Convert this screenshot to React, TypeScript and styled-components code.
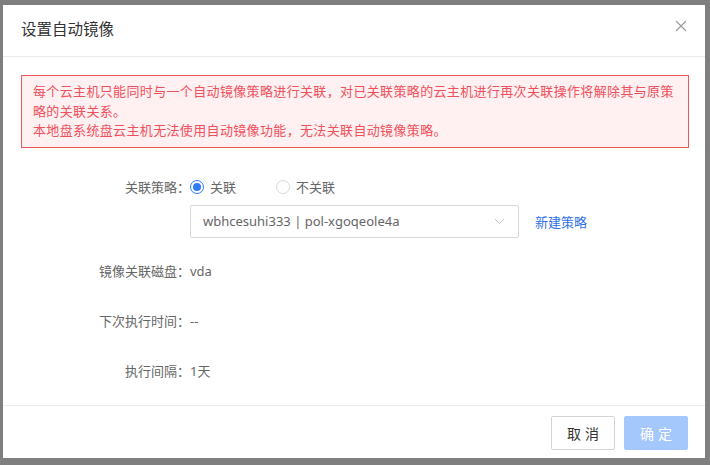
import React, { ReactElement } from "react";
import styled, { createGlobalStyle } from "styled-components";

const GlobalStyle = createGlobalStyle`
  html, body {
    margin: 0;
    padding: 0;
    background: #7f7f7f;
  }
  body {
    font-family: "Noto Sans", "Noto Sans CJK SC", sans-serif;
    font-size: 13px;
    color: #666;
  }
`;

const Overlay = styled.div`
  width: 710px;
  height: 465px;
  padding: 5px 5px 0 3px;
  box-sizing: border-box;
  overflow: hidden;
`;

const Modal = styled.div`
  width: 702px;
  height: 453px;
  background: #fff;
  display: flex;
  flex-direction: column;
`;

const Header = styled.div`
  height: 52px;
  box-sizing: border-box;
  border-bottom: 1px solid #ebebeb;
  display: flex;
  align-items: center;
  justify-content: space-between;
  padding: 0 18px 4px 18px;
`;

const Title = styled.div`
  font-size: 15.5px;
  color: #333;
`;

const Close = styled.button`
  border: none;
  background: none;
  padding: 0;
  width: 12px;
  height: 12px;
  display: flex;
  cursor: pointer;
  margin-top: -6px;
`;

const Body = styled.div`
  flex: 1;
  padding: 18px 16px 0 18px;
  display: flex;
  flex-direction: column;
`;

const Alert = styled.div`
  border: 1px solid #f0585f;
  background: #fff0f2;
  color: #f0505c;
  padding: 6px 10px 6px 11px;
  line-height: 19.5px;
  font-size: 13px;
  letter-spacing: 0.35px;
`;

const Row = styled.div<{ $top: number }>`
  display: flex;
  align-items: center;
  margin-top: ${(p) => p.$top}px;
  min-height: 20px;
`;

const Label = styled.div`
  width: 169px;
  text-align: right;
  color: #666;
  flex-shrink: 0;
`;

const Value = styled.div`
  color: #666;
`;

const RadioItem = styled.label`
  display: flex;
  align-items: center;
  gap: 6px;
  margin-right: 40px;
  color: #666;
  cursor: pointer;
`;

const RadioCircle = styled.span<{ $checked?: boolean }>`
  width: 14px;
  height: 14px;
  box-sizing: border-box;
  border-radius: 50%;
  border: 1px solid ${(p) => (p.$checked ? "#2f7cf6" : "#d9d9d9")};
  display: flex;
  align-items: center;
  justify-content: center;
  &::after {
    content: "";
    width: 8px;
    height: 8px;
    border-radius: 50%;
    background: ${(p) => (p.$checked ? "#2f7cf6" : "transparent")};
  }
`;

const Select = styled.div`
  width: 329px;
  height: 33px;
  box-sizing: border-box;
  border: 1px solid #d9d9d9;
  border-radius: 2px;
  display: flex;
  align-items: center;
  justify-content: space-between;
  padding: 0 13px 0 12px;
  color: #666;
  font-size: 13px;
`;

const Link = styled.a`
  color: #2f72e8;
  margin-left: 16px;
  text-decoration: none;
  cursor: pointer;
`;

const Footer = styled.div`
  border-top: 1px solid #ebebeb;
  padding: 10px 17px 8px;
  display: flex;
  justify-content: flex-end;
  gap: 9px;
`;

const Button = styled.button<{ $primary?: boolean }>`
  width: 64px;
  height: 34px;
  box-sizing: border-box;
  border-radius: 2px;
  border: 1px solid ${(p) => (p.$primary ? "#a4c7fc" : "#d4d4d4")};
  background: ${(p) => (p.$primary ? "#a4c7fc" : "#fff")};
  color: ${(p) => (p.$primary ? "#fff" : "#333")};
  font-family: "Noto Sans", "Noto Sans CJK SC", sans-serif;
  font-size: 14px;
  letter-spacing: 4px;
  padding: 0 0 0 4px;
  cursor: pointer;
`;

function App(): ReactElement {
  return (
    <Overlay>
      <GlobalStyle />
      <Modal>
        <Header>
          <Title>设置自动镜像</Title>
          <Close>
            <svg width="12" height="12" viewBox="0 0 12 12">
              <path d="M1 1 L11 11 M11 1 L1 11" stroke="#999" strokeWidth="1.1" fill="none" />
            </svg>
          </Close>
        </Header>
        <Body>
          <Alert>
            每个云主机只能同时与一个自动镜像策略进行关联，对已关联策略的云主机进行再次关联操作将解除其与原策略的关联关系。
            <br />
            本地盘系统盘云主机无法使用自动镜像功能，无法关联自动镜像策略。
          </Alert>
          <Row $top={29}>
            <Label>关联策略：</Label>
            <RadioItem>
              <RadioCircle $checked />
              关联
            </RadioItem>
            <RadioItem>
              <RadioCircle />
              不关联
            </RadioItem>
          </Row>
          <Row $top={8}>
            <Label />
            <Select>
              <span>wbhcesuhi333 | pol-xgoqeole4a</span>
              <svg width="11" height="7" viewBox="0 0 11 7">
                <polyline points="1,1 5.5,5.5 10,1" stroke="#c4c4c4" strokeWidth="1" fill="none" />
              </svg>
            </Select>
            <Link>新建策略</Link>
          </Row>
          <Row $top={23}>
            <Label>镜像关联磁盘：</Label>
            <Value>vda</Value>
          </Row>
          <Row $top={30}>
            <Label>下次执行时间：</Label>
            <Value>--</Value>
          </Row>
          <Row $top={30}>
            <Label>执行间隔：</Label>
            <Value>1天</Value>
          </Row>
        </Body>
        <Footer>
          <Button>取消</Button>
          <Button $primary>确定</Button>
        </Footer>
      </Modal>
    </Overlay>
  );
}

export default App;
